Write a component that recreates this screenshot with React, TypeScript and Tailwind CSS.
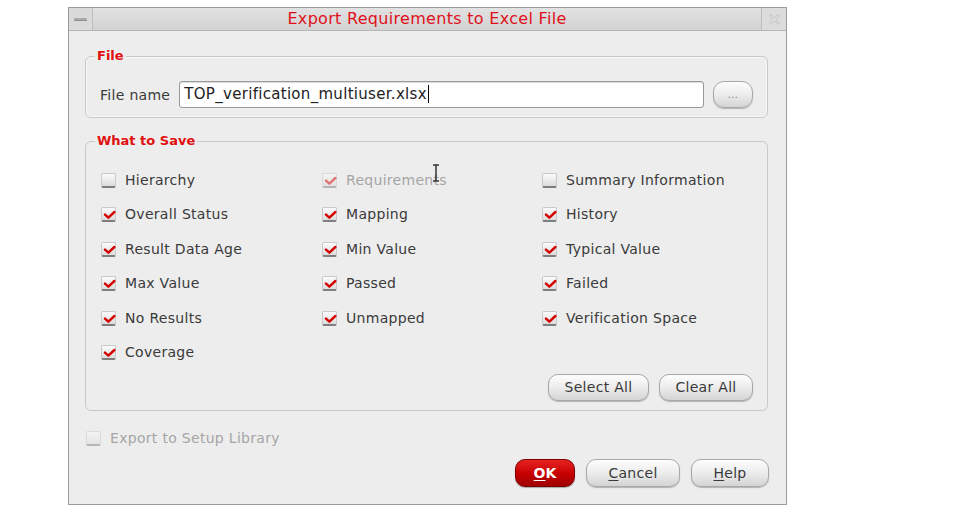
import React from "react";

const font = { fontFamily: '"DejaVu Sans", "Noto Sans", sans-serif' };

function Check({ checked, disabled }: { checked: boolean; disabled?: boolean }) {
  return (
    <span
      className={`relative inline-block w-[15px] h-[15px] rounded-[2px] border border-[#c9c9c9] border-b-[2px] border-b-[#7e7e7e] bg-gradient-to-b from-[#fbfbfb] to-[#dcdcdc] shrink-0 ${disabled ? "opacity-50" : ""}`}
    >
      {checked && (
        <svg viewBox="0 0 16 16" className="absolute left-[1px] top-[1px] w-[13px] h-[12px]">
          <path d="M2 7.5 L6.5 11.5 L14.5 4" fill="none" stroke="#d40000" strokeWidth="3.2" strokeLinecap="round" strokeLinejoin="round" />
        </svg>
      )}
    </span>
  );
}

function Item({ label, checked, disabled }: { label: string; checked: boolean; disabled?: boolean }) {
  return (
    <div className="flex items-center gap-[9px] h-[20px]">
      <Check checked={checked} disabled={disabled} />
      <span className={`text-[14px] tracking-[0.3px] ${disabled ? "text-[#a5a5a5]" : "text-[#3a3a3a]"}`}>{label}</span>
    </div>
  );
}

function Btn({ children, className }: { children: React.ReactNode; className?: string }) {
  return (
    <div
      className={`flex items-center justify-center h-[27px] rounded-[10px] border border-[#a8a8a8] bg-gradient-to-b from-[#fdfdfd] via-[#ececec] to-[#d4d4d4] shadow-[0_1px_1px_rgba(0,0,0,0.25)] text-[14px] tracking-[0.3px] text-[#3a3a3a] ${className || ""}`}
    >
      {children}
    </div>
  );
}

const items: [string, boolean, boolean?][] = [
  ["Hierarchy", false],
  ["Requirements", true, true],
  ["Summary Information", false],
  ["Overall Status", true],
  ["Mapping", true],
  ["History", true],
  ["Result Data Age", true],
  ["Min Value", true],
  ["Typical Value", true],
  ["Max Value", true],
  ["Passed", true],
  ["Failed", true],
  ["No Results", true],
  ["Unmapped", true],
  ["Verification Space", true],
  ["Coverage", true],
];

export default function App() {
  return (
    <div className="w-[957px] h-[517px] bg-white overflow-hidden" style={font}>
      <div className="ml-[68px] mt-[7px] w-[719px] h-[498px] border border-[#9c9c9c] bg-[#ededed] flex flex-col">
        {/* title bar */}
        <div className="h-[23px] flex items-stretch bg-gradient-to-b from-[#e2e2e2] to-[#d2d2d2] border-b border-[#b5b5b5]">
          <div className="w-[24px] flex items-center justify-center border-r border-[#bdbdbd] bg-[#dadada]">
            <span className="block w-[13px] h-[3px] rounded-[1px] bg-[#a9a9a9] border-b border-[#8d8d8d]" />
          </div>
          <div className="flex-1 flex items-center justify-center text-[16px] tracking-[0.3px] text-[#e0101a]">
            Export Requirements to Excel File
          </div>
          <div className="w-[25px] flex items-center justify-center border-l border-[#bdbdbd] bg-[#dcdcdc]">
            <svg viewBox="0 0 14 14" className="w-[13px] h-[13px]">
              <path d="M3 3 L11 11 M11 3 L3 11" stroke="#c2c2c2" strokeWidth="3" strokeLinecap="round" />
              <path d="M3 3 L11 11 M11 3 L3 11" stroke="#e6e6e6" strokeWidth="1.2" strokeLinecap="round" />
            </svg>
          </div>
        </div>

        <div className="flex-1 flex flex-col pl-[16px] pr-[18px] pt-[25px]">
          {/* File group */}
          <div className="relative h-[62px] rounded-[6px] border border-[#c8c8c8] shadow-[inset_0_0_0_1px_#f7f7f7] flex items-center pl-[14px] pr-[14px] pt-[14px]">
            <span className="absolute -top-[9px] left-[9px] px-[2px] bg-[#ededed] text-[13px] font-bold text-[#e01010] leading-[16px]">File</span>
            <span className="text-[14px] tracking-[0.3px] text-[#3a3a3a] mr-[9px] mt-[2px]">File name</span>
            <div className="flex-1 h-[27px] rounded-[3px] border border-[#9a9a9a] bg-white shadow-[inset_0_1px_1px_rgba(0,0,0,0.15)] flex items-center px-[4px] text-[15px] tracking-[0.3px] text-[#222]">
              TOP_verification_multiuser.xlsx<span className="inline-block w-[1px] h-[18px] bg-black ml-[1px]" />
            </div>
            <Btn className="ml-[9px] w-[40px] h-[26px] rounded-[11px] !text-[10px] !text-[#888]">...</Btn>
          </div>

          {/* What to Save group */}
          <div className="relative mt-[23px] h-[270px] rounded-[6px] border border-[#c8c8c8] pl-[15px] pr-[14px] pt-[28px]">
            <span className="absolute -top-[9px] left-[9px] px-[2px] bg-[#ededed] text-[13px] font-bold text-[#e01010] leading-[16px]">What to Save</span>
            <div className="grid grid-cols-[221px_220px_1fr] gap-y-[14.6px]">
              {items.map(([l, c, d]) => (
                <Item key={l} label={l} checked={c} disabled={d} />
              ))}
            </div>
            <div className="absolute right-[14px] bottom-[9px] flex gap-[10px]">
              <Btn className="w-[101px]">Select All</Btn>
              <Btn className="w-[94px]">Clear All</Btn>
            </div>
            <svg viewBox="0 0 8 18" className="absolute left-[346px] top-[22px] w-[8px] h-[18px]">
              <path d="M1 1 H7 M4 1 V17 M1 17 H7" stroke="#333" strokeWidth="1.5" fill="none" />
            </svg>
          </div>

          {/* Export to setup */}
          <div className="mt-[17px] ml-[1px] flex items-center gap-[9px] h-[20px]">
            <Check checked={false} disabled />
            <span className="text-[14px] tracking-[0.3px] text-[#a5a5a5]">Export to Setup Library</span>
          </div>

          <div className="mt-[11px] flex justify-end gap-[11px] -mr-[1px]">
            <div className="w-[60px] h-[28px] rounded-[10px] border border-[#7a0000] bg-gradient-to-b from-[#e82020] via-[#c80000] to-[#a00000] shadow-[0_1px_1px_rgba(0,0,0,0.3)] flex items-center justify-center text-[14px] font-bold text-white">
              <span className="underline underline-offset-2">O</span>K
            </div>
            <Btn className="w-[94px] h-[28px]">
              <span className="underline underline-offset-2">C</span>ancel
            </Btn>
            <Btn className="w-[78px] h-[28px]">
              <span className="underline underline-offset-2">H</span>elp
            </Btn>
          </div>
        </div>
      </div>
    </div>
  );
}
